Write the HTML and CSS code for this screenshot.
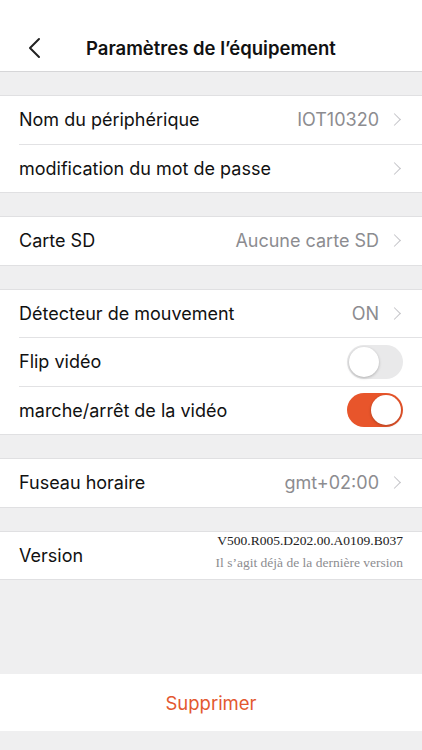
FILE: index.html
```html
<!DOCTYPE html>
<html lang="fr">
<head>
    <meta charset="UTF-8">
    <meta name="viewport" content="width=device-width, initial-scale=1.0">
    <title>Paramètres de l'équipement</title>
    <link rel="stylesheet" href="styles.css">
</head>
<body>
    <div class="page">
        <div class="statusbar"></div>
        <div class="navbar">
            <svg class="back" width="14" height="22" viewBox="0 0 14 22">
                <path d="M11 2 L2 11 L11 20" fill="none" stroke="#222" stroke-width="2" stroke-linecap="round" stroke-linejoin="round"/>
            </svg>
            <h1>Paramètres de l’équipement</h1>
        </div>

        <div class="group">
            <div class="row">
                <span class="label">Nom du périphérique</span>
                <span class="value">IOT10320</span>
                <span class="chevron"></span>
            </div>
            <div class="row">
                <span class="label">modification du mot de passe</span>
                <span class="value"></span>
                <span class="chevron"></span>
            </div>
        </div>

        <div class="group">
            <div class="row">
                <span class="label">Carte SD</span>
                <span class="value">Aucune carte SD</span>
                <span class="chevron"></span>
            </div>
        </div>

        <div class="group">
            <div class="row">
                <span class="label">Détecteur de mouvement</span>
                <span class="value">ON</span>
                <span class="chevron"></span>
            </div>
            <div class="row">
                <span class="label">Flip vidéo</span>
                <span class="switch"></span>
            </div>
            <div class="row">
                <span class="label">marche/arrêt de la vidéo</span>
                <span class="switch on"></span>
            </div>
        </div>

        <div class="group">
            <div class="row">
                <span class="label">Fuseau horaire</span>
                <span class="value">gmt+02:00</span>
                <span class="chevron"></span>
            </div>
        </div>

        <div class="group">
            <div class="row">
                <span class="label">Version</span>
                <div class="version">
                    <div class="version-num">V500.R005.D202.00.A0109.B037</div>
                    <div class="version-note">Il s’agit déjà de la dernière version</div>
                </div>
            </div>
        </div>

        <div class="spacer"></div>

        <button class="delete">Supprimer</button>
    </div>
</body>
</html>
```

FILE: styles.css
```css
body {
    margin: 0;
    font-family: Inter, "Noto Sans", sans-serif;
    background-color: #efeff0;
    color: #111;
}
.page {
    width: 422px;
    height: 750px;
    display: flex;
    flex-direction: column;
    overflow: hidden;
}
.statusbar {
    height: 24px;
    background-color: #fff;
}
.navbar {
    height: 47px;
    background-color: #fff;
    border-bottom: 1px solid #d6d6d8;
    display: flex;
    align-items: center;
    padding-left: 28px;
}
.navbar h1 {
    margin: 0 0 0 44px;
    font-size: 18.5px;
    font-weight: 600;
    color: #111;
}
.group {
    margin-top: 23px;
    background-color: #fff;
    border-top: 1px solid #e0e0e2;
    border-bottom: 1px solid #e0e0e2;
}
.row {
    height: 47.5px;
    display: flex;
    align-items: center;
    padding: 0 19px;
}
.row + .row {
    border-top: 1px solid #e2e2e4;
    margin-left: 19px;
    padding-left: 0;
}
.label {
    font-size: 18px;
    flex: 1;
}
.value {
    font-size: 18px;
    color: #8c8c90;
}
.chevron {
    width: 8px;
    height: 8px;
    border-right: 1.6px solid #c4c4c8;
    border-top: 1.6px solid #c4c4c8;
    transform: rotate(45deg);
    margin-left: 11px;
    margin-right: 4px;
}
.switch {
    width: 56px;
    height: 34px;
    border-radius: 17px;
    background-color: #e9e9ea;
    position: relative;
}
.switch::after {
    content: "";
    position: absolute;
    top: 2px;
    left: 2px;
    width: 30px;
    height: 30px;
    border-radius: 50%;
    background-color: #fff;
    box-shadow: 0 1px 3px rgba(0, 0, 0, 0.25);
}
.switch.on {
    background-color: #e8552b;
}
.switch.on::after {
    left: 24px;
}
.version {
    text-align: right;
    font-family: "Liberation Serif", serif;
}
.version-num {
    font-size: 13.5px;
    color: #222;
    margin-top: -6px;
}
.version-note {
    font-size: 13.5px;
    color: #8c8c90;
    margin-top: 6px;
}
.spacer {
    flex: 1;
}
.delete {
    height: 57px;
    margin-bottom: 19px;
    border: none;
    background-color: #fff;
    color: #e3582f;
    font-family: Inter, "Noto Sans", sans-serif;
    font-size: 18.5px;
    width: 100%;
}
```
